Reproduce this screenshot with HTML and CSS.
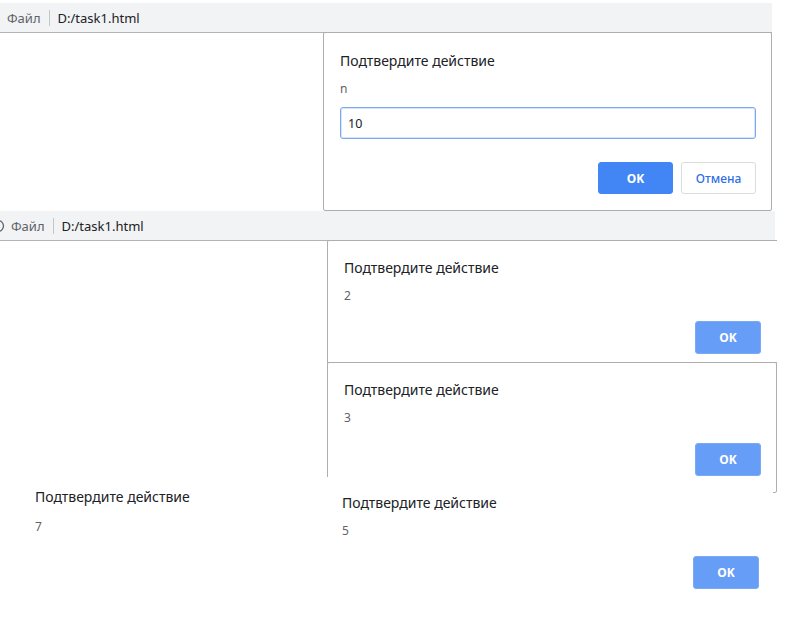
FILE: index.html
```html
<!DOCTYPE html>
<html lang="ru">
<head>
<meta charset="utf-8">
<title>Подтвердите действие</title>
<link rel="stylesheet" href="styles.css">
</head>
<body>
<div class="canvas">
  <section class="shot shot-1">
    <div class="toolbar">
      <span class="file">Файл</span>
      <span class="sep"></span>
      <span class="url">D:/task1.html</span>
    </div>
    <div class="viewport"></div>
  </section>

  <section class="shot shot-2">
    <div class="toolbar">
      <svg class="info" width="6" height="14" viewBox="0 0 6 14"><circle cx="-2" cy="7" r="5.5" fill="none" stroke="#5f6368" stroke-width="1.3"/></svg>
      <span class="file">Файл</span>
      <span class="sep"></span>
      <span class="url">D:/task1.html</span>
    </div>
    <div class="viewport"></div>
  </section>

  <div class="dialog dialog-1">
    <div class="title">Подтвердите действие</div>
    <div class="message">n</div>
    <div class="field">10</div>
    <div class="actions actions-wide">
      <button class="btn btn-ok">OK</button>
      <button class="btn btn-cancel">Отмена</button>
    </div>
  </div>

  <div class="dialog dialog-2">
    <div class="title">Подтвердите действие</div>
    <div class="message">2</div>
    <div class="actions">
      <button class="btn btn-ok btn-light">OK</button>
    </div>
  </div>

  <div class="dialog dialog-3">
    <div class="title">Подтвердите действие</div>
    <div class="message">3</div>
    <div class="actions">
      <button class="btn btn-ok btn-light">OK</button>
    </div>
  </div>

  <div class="fragment fragment-7">
    <div class="title">Подтвердите действие</div>
    <div class="message">7</div>
  </div>

  <div class="dialog dialog-5">
    <div class="title">Подтвердите действие</div>
    <div class="message">5</div>
    <div class="actions">
      <button class="btn btn-ok btn-light">OK</button>
    </div>
  </div>
</div>
</body>
</html>
```

FILE: styles.css
```css
* { box-sizing: border-box; }

html, body {
  margin: 0;
  padding: 0;
  background: #ffffff;
}

body {
  font-family: "Noto Sans", "Open Sans", sans-serif;
  color: #202124;
}

.canvas {
  position: relative;
  width: 792px;
  height: 619px;
  overflow: hidden;
  background: #ffffff;
}

/* browser screenshot fragments */
.shot {
  position: absolute;
  left: 0;
  display: flex;
  flex-direction: column;
}

.shot-1 { top: 3px; width: 772px; height: 208px; }
.shot-2 { top: 211px; width: 775px; height: 40px; }

.toolbar {
  height: 29px;
  background: #f1f3f4;
  display: flex;
  align-items: center;
  padding-left: 7px;
  font-size: 13px;
  flex: none;
}

.shot-2 .toolbar { padding-left: 0; }
.shot-2 .toolbar .info { margin-right: 5px; }

.file { color: #5f6368; }

.sep {
  width: 1px;
  height: 16px;
  background: #c4c7c5;
  margin: 0 8px 0 8px;
}

.url {
  color: #202124;
  font-size: 13px;
}

.viewport {
  flex: 1;
  border-top: 1px solid #b3b3b3;
  background: #ffffff;
}

/* dialogs */
.dialog {
  position: absolute;
  background: #ffffff;
  border: 1px solid #aeaeae;
  border-radius: 2px;
  padding: 17px 15px 0 16px;
  display: flex;
  flex-direction: column;
}

.dialog-1 { left: 323px; top: 32px; width: 449px; height: 179px; padding-top: 18px; }
.dialog-2 {
  left: 327px; top: 240px; width: 450px; height: 123px;
  border-right: none;
  border-radius: 2px 0 0 0;
  padding-right: 16px;
}
.dialog-3 { left: 327px; top: 362px; width: 450px; height: 131px; }
.dialog-5 {
  left: 320px; top: 477px; width: 453px; height: 142px;
  border: none;
  padding: 16px 14px 0 22px;
}

.title {
  font-size: 14px;
  line-height: 20px;
  color: #202124;
}

.message {
  margin-top: 8px;
  font-size: 12px;
  line-height: 20px;
  color: #5f6368;
}

.field {
  margin-top: 8px;
  height: 32px;
  border: 1px solid #7ca8f2;
  border-radius: 3px;
  box-shadow: inset 0 0 0 1px #d6e4fc;
  display: flex;
  align-items: center;
  padding-left: 7px;
  font-size: 12.5px;
  color: #202124;
}

.actions {
  margin-top: 15px;
  display: flex;
  justify-content: flex-end;
  gap: 8px;
}

.actions-wide { margin-top: 23px; }

.btn {
  font-family: "Noto Sans", "Open Sans", sans-serif;
  height: 32px;
  border-radius: 3px;
  font-size: 12px;
  cursor: default;
}

.btn-ok {
  width: 75px;
  background: #4285f4;
  border: 1px solid #4285f4;
  color: #ffffff;
  font-weight: 700;
}

.btn-light {
  width: 66px;
  height: 33px;
  background: #669df6;
  border-color: #7aaaf4;
}

.btn-cancel {
  width: 75px;
  background: #ffffff;
  border: 1px solid #dadce0;
  color: #2f6fe4;
  font-weight: 500;
}

/* bottom-left fragment */
.fragment {
  position: absolute;
  display: flex;
  flex-direction: column;
}

.fragment-7 { left: 35px; top: 487px; }
.fragment-7 .message { margin-top: 10px; }
```
